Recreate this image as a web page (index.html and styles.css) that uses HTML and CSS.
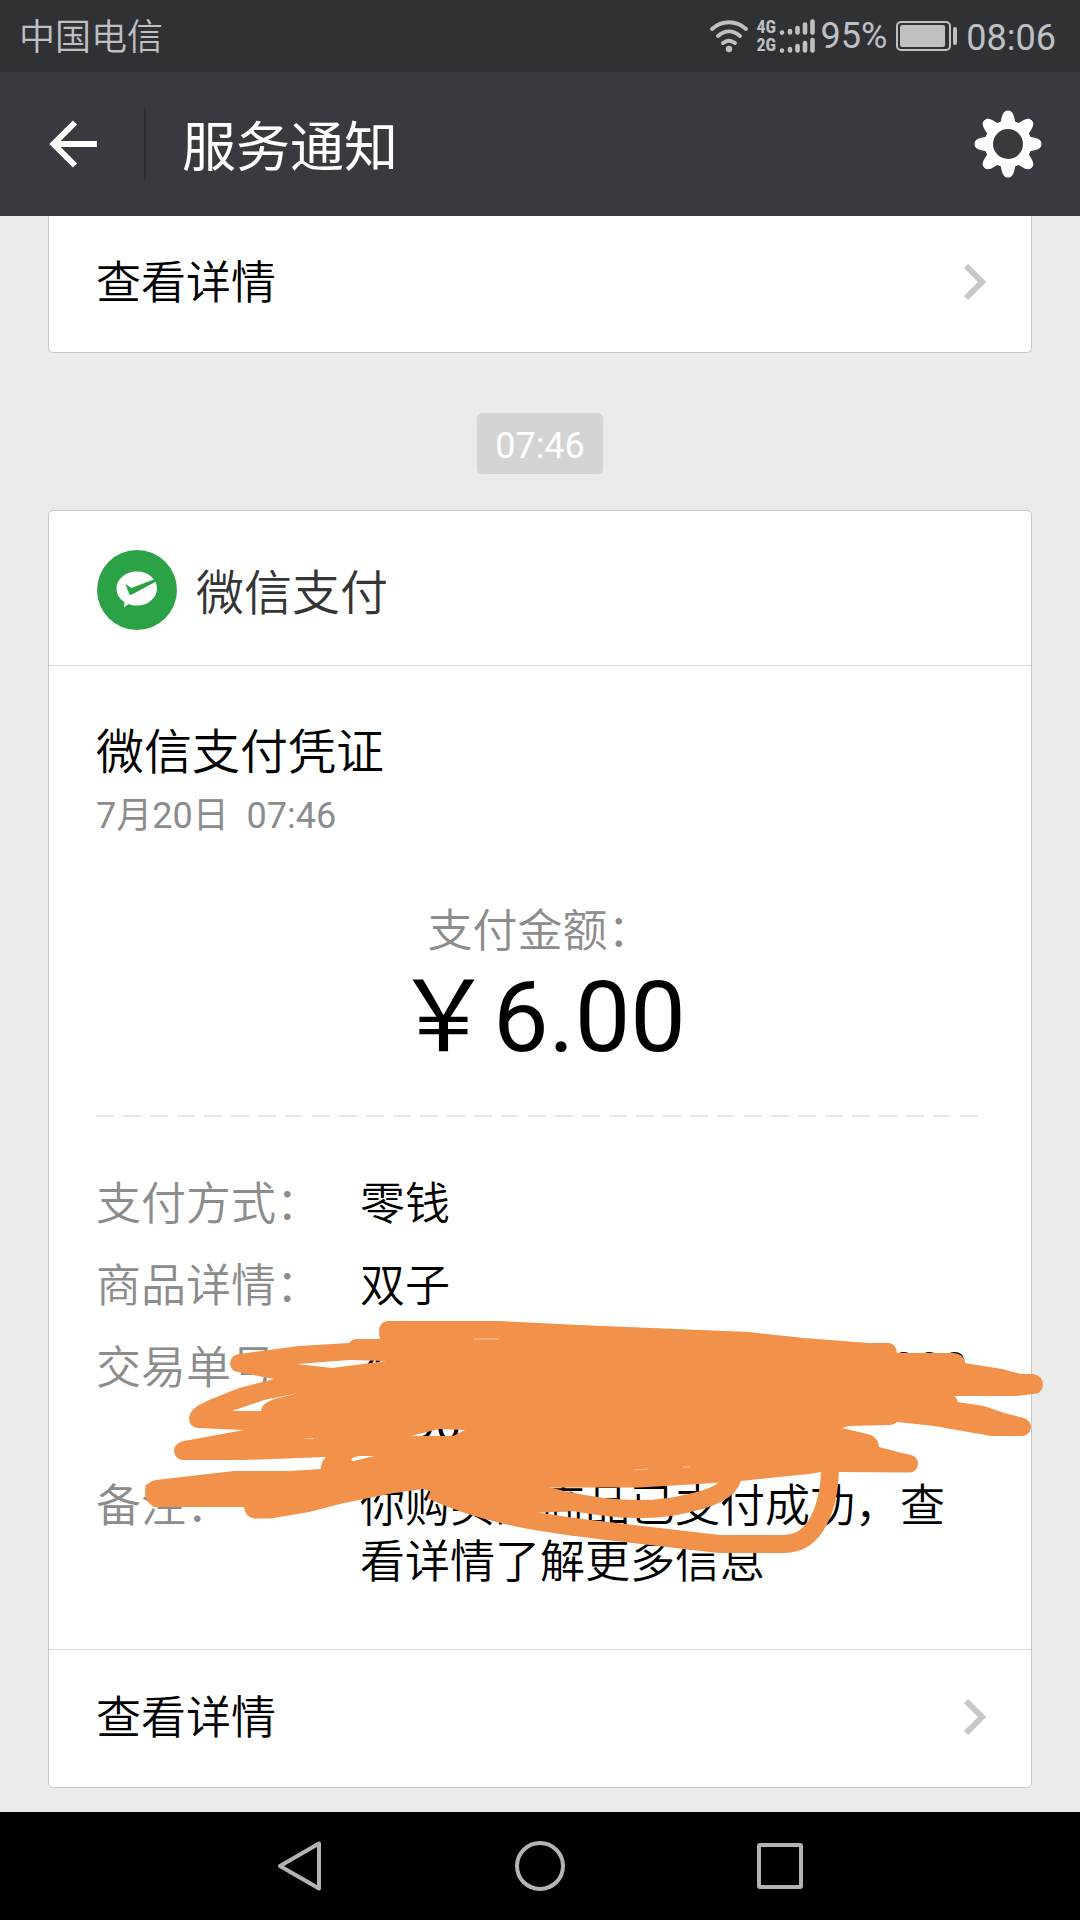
FILE: index.html
```html
<!DOCTYPE html>
<html lang="zh-CN">
<head>
<meta charset="utf-8">
<meta name="viewport" content="width=device-width, initial-scale=1">
<title>服务通知</title>
<link rel="stylesheet" href="styles.css">
</head>
<body>
<div class="status">
  <span class="carrier">中国电信</span>
  <div class="indicators">
    <svg class="wifi" width="40" height="34" viewBox="0 0 40 34" fill="none" stroke="currentColor" stroke-width="4" stroke-linecap="round" aria-hidden="true">
      <path d="M3 10C13 1 27 1 37 10M9 17C16 11 24 11 31 17M14 24C18 21 22 21 26 24"/>
      <circle cx="20" cy="30" r="3.2" fill="currentColor" stroke="none"/>
    </svg>
    <div class="network"><span>4G</span><span>2G</span></div>
    <svg class="bars" width="36" height="36" viewBox="0 0 36 36" stroke="currentColor" stroke-width="4.600" stroke-linecap="round" aria-hidden="true">
      <path d="M3 14.5v.1M11 13v1.500M18.500 10v4.500M26 6.500v8M33.500 3.500v11M3 32.500v.1M11 31v1.500M18.500 28v4.500M26 25v7.500M33.500 22v10.500"/>
    </svg>
    <span class="percent">95%</span>
    <svg class="battery" width="62" height="30" viewBox="0 0 62 30" aria-hidden="true">
      <rect x="1" y="1" width="53" height="28" rx="4" fill="none" stroke="currentColor" stroke-width="2"/>
      <rect x="4" y="4" width="45" height="22" rx="2" fill="currentColor"/>
      <rect x="57" y="6" width="4" height="18" rx="2" fill="currentColor"/>
    </svg>
    <span class="clock">08:06</span>
  </div>
</div>

<header class="topbar">
  <button class="back" type="button" aria-label="返回">
    <svg width="48" height="48" viewBox="0 0 48 48" fill="none" stroke="currentColor" stroke-width="6" aria-hidden="true"><path d="M48 24H4M26 2.500L4.500 24L26 45.500"/></svg>
  </button>
  <h1 class="title">服务通知</h1>
  <button class="settings" type="button" aria-label="设置">
    <svg width="68" height="68" viewBox="-34 -34 68 68" aria-hidden="true">
      <g fill="currentColor">
        <path id="tooth" d="M-8 -20C-6 -25 -6.500 -33.500 0 -33.500C6.500 -33.500 6 -25 8 -20V20C6 25 6.500 33.500 0 33.500C-6.500 33.500 -6 25 -8 20Z"/>
        <use href="#tooth" transform="rotate(45)"/>
        <use href="#tooth" transform="rotate(90)"/>
        <use href="#tooth" transform="rotate(135)"/>
        <circle r="23.500"/>
      </g>
      <circle class="gear-hole" r="15"/>
    </svg>
  </button>
</header>

<main class="feed">
  <section class="card card-cut">
    <a class="more" href="#">查看详情
      <svg width="24" height="36" viewBox="0 0 24 36" fill="none" stroke="currentColor" stroke-width="6" aria-hidden="true"><path d="M3 2L19 18L3 34"/></svg>
    </a>
  </section>

  <time class="stamp">07:46</time>

  <article class="card">
    <div class="sender">
      <svg width="80" height="80" viewBox="0 0 80 80" aria-hidden="true">
        <circle cx="40" cy="40" r="40" fill="#2ba245"/>
        <path fill="#fff" d="M40 21.500C51 21.500 60 29 60 38.500C60 48 51 55.500 40 55.500C37 55.500 34 55 31.500 54L27 57.500L27.500 52C22.500 49 19.500 44 19.500 38.500C19.500 29 29 21.500 40 21.500Z"/>
        <path fill="#2ba245" d="M28.500 34L34.500 38L58 29L60 31L35 44.500C33.500 45.200 32.500 44.500 32 43.500Z"/>
      </svg>
      <span class="sender-name">微信支付</span>
    </div>
    <div class="receipt">
      <h2 class="subject">微信支付凭证</h2>
      <p class="date">7月20日&nbsp; 07:46</p>
      <p class="amount-label">支付金额：</p>
      <p class="amount">￥6.00</p>
      <div class="dashes"></div>
      <div class="details">
        <dl class="rows">
          <dt>支付方式：</dt><dd>零钱</dd>
          <dt>商品详情：</dt><dd>双子</dd>
          <dt>交易单号：</dt><dd class="number">4000000000000000000000000090</dd>
          <dt>备注：</dt><dd>你购买的商品已支付成功，查看详情了解更多信息</dd>
        </dl>
        <svg class="scribble" width="886" height="414" viewBox="97 1177 886 414" aria-hidden="true">
          <path fill="#f2914a" fill-rule="evenodd" d="M388 1321H500L580 1325L750 1332L805 1338L870 1343H890Q897 1344 898 1353L955 1353Q965 1354 966 1363L1003 1369L1022 1374H1034Q1044 1376 1044 1385Q1043 1394 1034 1394L1018 1396H955Q958 1398 959 1402L985 1406L1005 1413L1025 1418Q1032 1421 1032 1427Q1031 1435 1024 1436H992L935 1426L898 1422Q895 1425 890 1425L850 1426L843 1428L860 1432L872 1435Q880 1439 880 1447L903 1453L912 1455Q919 1457 919 1464Q918 1472 911 1472.500L840 1472H822L810 1474L780 1477L742 1481L700 1484L640 1487.500H524L580 1501L575 1511L530 1513L480 1505L424 1489L395 1493L345 1503L310 1512L272 1518.500H255Q246 1517 245 1507H155Q146 1502 146 1492Q146 1482 157 1480L235 1471H290L322 1469Q322 1461 327 1457L245 1460H183Q175 1458 175 1450Q176 1443 185 1441L245 1430L198 1428Q190 1426 190 1418Q191 1410 200 1405L210 1400L240 1388L275 1379L238 1372Q231 1370 231 1363Q232 1355 240 1354L300 1346L350 1343Q353 1339 358 1339H381Q377 1323 388 1321ZM298 1364L333 1368L387 1361L350 1360ZM233 1411L262 1411Q262 1404 275 1399L300 1393L265 1400ZM412 1436L440 1429L466 1430L454 1436ZM304 1439L315 1438L313 1439ZM352 1460Q353 1457 360 1456H375L355 1461Z"/>
          <path fill="none" stroke="#f2914a" stroke-width="18" d="M432 1490C480 1512 530 1522 600 1530L720 1544H785C818 1544 831 1505 831 1465M510 1486L560 1499C600 1508 650 1514 690 1503Q734 1494 734 1473"/>
          <path fill="none" stroke="#f8c79d" stroke-width="1" d="M474 1339H500M635 1470L649 1469M684 1467H691"/>
        </svg>
      </div>
    </div>
    <a class="more more-ruled" href="#">查看详情
      <svg width="24" height="36" viewBox="0 0 24 36" fill="none" stroke="currentColor" stroke-width="6" aria-hidden="true"><path d="M3 2L19 18L3 34"/></svg>
    </a>
  </article>
</main>

<nav class="navbar">
  <button type="button" aria-label="后退"><svg width="52" height="52" viewBox="0 0 52 52" aria-hidden="true"><path d="M45 3.500V48.500L6 26Z"/></svg></button>
  <button type="button" aria-label="主屏幕"><svg width="52" height="52" viewBox="0 0 52 52" aria-hidden="true"><circle cx="26" cy="26" r="23"/></svg></button>
  <button type="button" aria-label="最近任务"><svg width="52" height="52" viewBox="0 0 52 52" aria-hidden="true"><rect x="5" y="5" width="42" height="42" rx="1"/></svg></button>
</nav>
</body>
</html>
```
FILE: styles.css
```css
* {
  box-sizing: border-box;
}

body {
  margin: 0;
  min-height: 100vh;
  display: flex;
  flex-direction: column;
  background: #ebebeb;
  color: #000;
  font-family: Roboto, "Noto Sans CJK SC", sans-serif;
  font-size: 45px;
  font-weight: 350;
  line-height: 56px;
}

h1, h2, p, dl, dd {
  margin: 0;
  font-weight: inherit;
}

button {
  padding: 0;
  border: 0;
  background: none;
  color: inherit;
  font: inherit;
}

svg {
  display: block;
  flex: none;
}

.status {
  display: flex;
  align-items: center;
  justify-content: space-between;
  height: 72px;
  padding: 0 24px 0 19px;
  background: #303135;
  color: #bfc0c4;
  font-size: 36px;
  line-height: 44px;
}

.carrier, .clock {
  padding-top: 4px;
}

.indicators {
  display: flex;
  align-items: center;
}

.percent, .clock, .date, .stamp, .amount, .number {
  font-weight: 400;
}

.network {
  display: flex;
  flex-direction: column;
  width: 22px;
  margin-left: 8px;
  font: bold 18px/18px "Roboto Condensed", "Liberation Sans Narrow", Roboto, sans-serif;
}

.percent {
  margin: 0 9px 0 6px;
}

.clock {
  margin-left: 8px;
}

.topbar {
  display: flex;
  align-items: center;
  height: 144px;
  padding-right: 38px;
  background: #393a3f;
  color: #fff;
}

.back {
  display: flex;
  align-items: center;
  width: 146px;
  height: 72px;
  padding-left: 49px;
  border-right: 2px solid #2c2d31;
}

.title {
  flex: 1;
  padding: 10px 0 0 36px;
  font-size: 54px;
  font-weight: 400;
  line-height: 72px;
}

.gear-hole {
  fill: #393a3f;
}

.feed {
  flex: 1;
  display: flex;
  flex-direction: column;
  padding: 0 48px 24px;
}

.card {
  border: 1px solid #c8c8c8;
  border-radius: 5px;
  background: #fff;
}

.card-cut {
  border-top: 0;
  border-radius: 0 0 5px 5px;
}

.more {
  display: flex;
  align-items: center;
  justify-content: space-between;
  height: 136px;
  padding: 0 44px 0 47px;
  color: #000;
  text-decoration: none;
}

.more svg {
  margin-bottom: 4px;
  color: #c7c7c7;
}

.more-ruled {
  height: 138px;
  border-top: 1px solid #dadada;
}

.stamp {
  align-self: center;
  margin: 60px 0 36px;
  padding: 11px 18px 6px;
  border-radius: 5px;
  background: #d4d4d4;
  color: #fff;
  font-size: 36px;
  line-height: 44px;
}

.sender {
  display: flex;
  align-items: center;
  gap: 19px;
  height: 155px;
  padding: 4px 48px 0;
  border-bottom: 1px solid #dadada;
  color: #353535;
  font-size: 48px;
}

.sender-name {
  padding-top: 8px;
}

.receipt {
  padding: 59px 47px 58px;
}

.subject {
  font-size: 48px;
}

.date {
  margin-top: 13px;
  color: #8c8c8c;
  font-size: 36px;
  line-height: 44px;
}

.amount-label {
  margin-top: 66px;
  color: #8c8c8c;
  text-align: center;
}

.amount {
  font-size: 99px;
  line-height: 114px;
  text-align: center;
}

.dashes {
  height: 2px;
  margin: 41px 0 60px;
  background: repeating-linear-gradient(90deg, #e6e6e6 0 18px, transparent 18px 27px);
}

.details {
  position: relative;
}

.rows {
  display: grid;
  grid-template-columns: 264px 1fr;
  row-gap: 26px;
}

.rows dt {
  color: #8c8c8c;
}

.number {
  padding-right: 16px;
  word-break: break-all;
}

.scribble {
  position: absolute;
  top: 0;
  left: 0;
  overflow: visible;
}

.navbar {
  display: flex;
  align-items: center;
  justify-content: center;
  gap: 188px;
  height: 108px;
  background: #000;
}

.navbar svg {
  fill: none;
  stroke: #b3b3b3;
  stroke-width: 4;
  stroke-linejoin: round;
}
```
